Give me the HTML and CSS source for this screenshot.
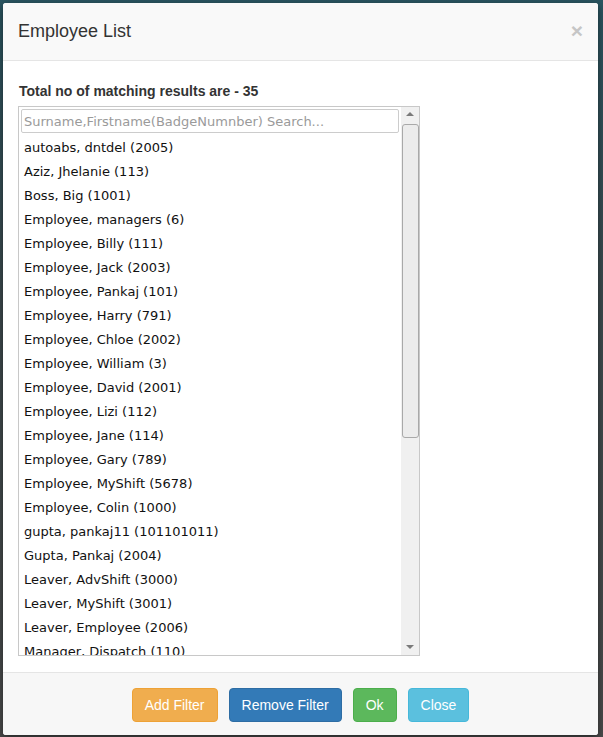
FILE: index.html
```html
<!DOCTYPE html>
<html lang="en">
<head>
    <meta charset="UTF-8">
    <title>Employee List</title>
    <link rel="stylesheet" href="styles.css">
</head>
<body>

    <!-- Employee picker dialog -->
    <div class="modal">
        <div class="modal-header">
            <h4 class="modal-title">Employee List</h4>
            <button type="button" class="close">&times;</button>
        </div>

        <div class="modal-body">
            <p class="result-count">Total no of matching results are - 35</p>

            <div class="picker">
                <div class="picker-main">
                    <input type="text" class="picker-search" placeholder="Surname,Firstname(BadgeNumnber) Search...">
                    <ul class="picker-list">
                        <li>autoabs, dntdel (2005)</li>
                        <li>Aziz, Jhelanie (113)</li>
                        <li>Boss, Big (1001)</li>
                        <li>Employee, managers (6)</li>
                        <li>Employee, Billy (111)</li>
                        <li>Employee, Jack (2003)</li>
                        <li>Employee, Pankaj (101)</li>
                        <li>Employee, Harry (791)</li>
                        <li>Employee, Chloe (2002)</li>
                        <li>Employee, William (3)</li>
                        <li>Employee, David (2001)</li>
                        <li>Employee, Lizi (112)</li>
                        <li>Employee, Jane (114)</li>
                        <li>Employee, Gary (789)</li>
                        <li>Employee, MyShift (5678)</li>
                        <li>Employee, Colin (1000)</li>
                        <li>gupta, pankaj11 (101101011)</li>
                        <li>Gupta, Pankaj (2004)</li>
                        <li>Leaver, AdvShift (3000)</li>
                        <li>Leaver, MyShift (3001)</li>
                        <li>Leaver, Employee (2006)</li>
                        <li>Manager, Dispatch (110)</li>
                    </ul>
                </div>

                <!-- scrollbar -->
                <div class="scrollbar">
                    <span class="arrow arrow-up"></span>
                    <div class="thumb"></div>
                    <span class="arrow arrow-down"></span>
                </div>
            </div>
        </div>

        <div class="modal-footer">
            <button type="button" class="btn btn-warning">Add Filter</button>
            <button type="button" class="btn btn-primary">Remove Filter</button>
            <button type="button" class="btn btn-success">Ok</button>
            <button type="button" class="btn btn-info">Close</button>
        </div>
    </div>

</body>
</html>
```

FILE: styles.css
```css
/* Basic Reset */
* {
    margin: 0;
    padding: 0;
    box-sizing: border-box;
}

body {
    font-family: 'Liberation Sans', Arial, sans-serif;
    font-size: 14px;
    color: #333;
    background: linear-gradient(180deg, #2a5561 0%, #3d4a4e 40%, #4b4b4b 100%);
    height: 737px;
    overflow: hidden;
    padding: 3px 5px 0 3px;
}

/* Dialog */
.modal {
    background: #fff;
    border-radius: 3px;
    box-shadow: 0 3px 9px rgba(0, 0, 0, 0.5);
    height: 732px;
    display: flex;
    flex-direction: column;
    overflow: hidden;
}

.modal-header {
    display: flex;
    justify-content: space-between;
    align-items: flex-start;
    padding: 15px;
    background: #f9f9f9;
    border-bottom: 1px solid #e5e5e5;
}

.modal-title {
    font-size: 18px;
    font-weight: normal;
    line-height: 27px;
    color: #333;
}

.close {
    border: none;
    background: none;
    font-family: 'Liberation Sans', Arial, sans-serif;
    font-size: 21px;
    font-weight: bold;
    line-height: 1;
    color: #c6c6c6;
    margin: 2px 0 0 0;
    cursor: pointer;
}

.modal-body {
    flex: 1;
    padding: 15px;
}

.result-count {
    font-weight: bold;
    line-height: 20px;
    margin: 5px 0 5px 1px;
}

/* Employee picker */
.picker {
    display: flex;
    width: 402px;
    height: 550px;
    border: 1px solid #c8c8c8;
}

.picker-main {
    flex: 1;
    padding: 2px 2px 0 2px;
    overflow: hidden;
}

.picker-search {
    display: block;
    width: 100%;
    height: 24px;
    padding: 0 2px;
    border: 1px solid #ccc;
    border-radius: 2px;
    font-family: 'DejaVu Sans', Verdana, sans-serif;
    font-size: 13px;
    color: #333;
    outline: none;
}

.picker-search::placeholder {
    color: #9a9a9a;
}

.picker-list {
    list-style: none;
    margin-top: 3px;
}

.picker-list li {
    font-family: 'DejaVu Sans', Verdana, sans-serif;
    font-size: 13px;
    line-height: 24px;
    height: 24px;
    padding-left: 3px;
    color: #111;
    white-space: nowrap;
}

.scrollbar {
    width: 18px;
    background: #f0f0f0;
    display: flex;
    flex-direction: column;
    align-items: center;
}

.arrow {
    width: 0;
    height: 0;
    border-left: 4px solid transparent;
    border-right: 4px solid transparent;
}

.arrow-up {
    border-bottom: 4px solid #7a7a7a;
    margin: 5px 0 8px;
}

.arrow-down {
    border-top: 4px solid #7a7a7a;
    margin: auto 0 6px;
}

.thumb {
    width: 17px;
    height: 314px;
    background: #ececec;
    border: 1px solid #a9a9a9;
    border-radius: 3px;
}

/* Footer buttons */
.modal-footer {
    display: flex;
    justify-content: center;
    gap: 11px;
    padding: 15px 15px 13px;
    background: #f7f7f7;
    border-top: 1px solid #e5e5e5;
}

.btn {
    font-family: 'Liberation Sans', Arial, sans-serif;
    font-size: 14px;
    line-height: 20px;
    padding: 6px 12px;
    border: 1px solid transparent;
    border-radius: 4px;
    color: #fff;
    cursor: pointer;
}

.btn-warning {
    background: #f0ad4e;
    border-color: #eea236;
}

.btn-primary {
    background: #337ab7;
    border-color: #2e6da4;
}

.btn-success {
    background: #5cb85c;
    border-color: #4cae4c;
}

.btn-info {
    background: #5bc0de;
    border-color: #46b8da;
}
```
